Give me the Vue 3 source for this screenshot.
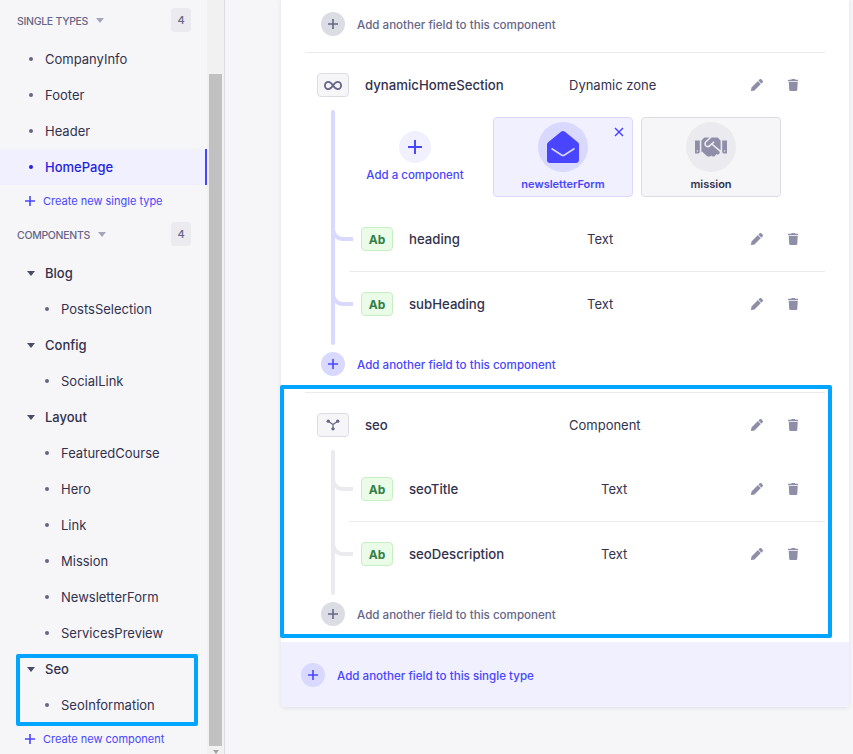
<template>
  <div class="page">
    <aside class="sidebar">
      <nav class="nav">
        <div class="group-head first">
          <span class="group-title">Single types</span>
          <span class="caret caret-light"></span>
          <span class="count">4</span>
        </div>
        <a v-for="item in singleTypes" :key="item" class="item" :class="{ active: item === 'HomePage' }">
          <span class="dot"></span>{{ item }}
        </a>
        <a class="create">
          <svg class="create-plus" viewBox="0 0 10 10"><path d="M5 0v10M0 5h10" /></svg>
          Create new single type
        </a>

        <div class="group-head second">
          <span class="group-title">Components</span>
          <span class="caret caret-light"></span>
          <span class="count">4</span>
        </div>
        <div class="categories">
          <div v-for="cat in categories" :key="cat.name">
            <div class="category"><span class="caret"></span>{{ cat.name }}</div>
            <a v-for="item in cat.items" :key="item" class="item sub">
              <span class="dot"></span>{{ item }}
            </a>
          </div>
        </div>
        <a class="create">
          <svg class="create-plus" viewBox="0 0 10 10"><path d="M5 0v10M0 5h10" /></svg>
          Create new component
        </a>
      </nav>
      <div class="scrollbar">
        <div class="thumb"></div>
        <span class="arrow"></span>
      </div>
    </aside>

    <main class="main">
      <div class="card">
        <div class="body">
          <div class="add-row">
            <span class="add-circle"><svg viewBox="0 0 10 10"><path d="M5 0v10M0 5h10" /></svg></span>
            <span class="add-text">Add another field to this component</span>
          </div>

          <section class="block">
            <div class="row top">
              <span class="kind">
                <svg class="kind-inf" viewBox="0 0 20 10">
                  <path d="M10 5C8 2 6.500 1 4.800 1 2.700 1 1 2.800 1 5s1.700 4 3.800 4C6.500 9 8 8 10 5c2 3 3.500 4 5.200 4 2.100 0 3.800-1.800 3.800-4s-1.700-4-3.800-4C13.500 1 12 2 10 5z" />
                </svg>
              </span>
              <span class="name">dynamicHomeSection</span>
              <span class="type">Dynamic zone</span>
              <span class="actions">
                <span class="act"><svg viewBox="0 0 512 512"><path :d="pencil" /></svg></span>
                <span class="act"><svg class="trash" viewBox="0 0 448 512"><path :d="trash" /></svg></span>
              </span>
            </div>
            <div class="nested accent">
              <div class="zone">
                <div class="zone-add">
                  <span class="zone-circle"><svg viewBox="0 0 10 10"><path d="M5 0v10M0 5h10" /></svg></span>
                  <span>Add a component</span>
                </div>
                <div class="tile selected">
                  <svg class="tile-x" viewBox="0 0 10 10"><path d="M1 1l8 8M9 1l-8 8" /></svg>
                  <span class="tile-icon">
                    <svg class="mail" viewBox="0 0 32 32">
                      <path class="mail-body" d="M14 .8c1.200-1 2.800-1 4 0l12.800 10.400c.8.600 1.200 1.400 1.200 2.400V29c0 1.700-1.300 3-3 3H3c-1.700 0-3-1.300-3-3V13.600c0-1 .4-1.800 1.200-2.400z" />
                      <path class="mail-flap" d="M4.500 17.500l10 6.500c1 .6 2 .6 3 0l10-6.500" />
                    </svg>
                  </span>
                  <span class="tile-label">newsletterForm</span>
                </div>
                <div class="tile">
                  <span class="tile-icon">
                    <svg class="shake" viewBox="0 0 640 512"><path :d="handshake" /></svg>
                  </span>
                  <span class="tile-label">mission</span>
                </div>
              </div>
              <div v-for="(f, i) in ['heading', 'subHeading']" :key="f" class="row field dz" :class="{ ruled: i > 0 }">
                <span class="ab">Ab</span>
                <span class="name">{{ f }}</span>
                <span class="type">Text</span>
                <span class="actions">
                  <span class="act"><svg viewBox="0 0 512 512"><path :d="pencil" /></svg></span>
                  <span class="act"><svg class="trash" viewBox="0 0 448 512"><path :d="trash" /></svg></span>
                </span>
              </div>
            </div>
            <div class="add-row active">
              <span class="add-circle"><svg viewBox="0 0 10 10"><path d="M5 0v10M0 5h10" /></svg></span>
              <span class="add-text">Add another field to this component</span>
            </div>
          </section>

          <section class="block">
            <div class="row top">
              <span class="kind">
                <svg class="kind-seo" viewBox="0 0 16 14">
                  <path class="seo-lines" d="M2.500 2.500L8 6.500l5.500-4M8 6.500v5" />
                  <circle cx="2.500" cy="2.500" r="2" />
                  <circle cx="13.500" cy="2.500" r="2" />
                  <circle cx="8" cy="11.500" r="2" />
                </svg>
              </span>
              <span class="name">seo</span>
              <span class="type">Component</span>
              <span class="actions">
                <span class="act"><svg viewBox="0 0 512 512"><path :d="pencil" /></svg></span>
                <span class="act"><svg class="trash" viewBox="0 0 448 512"><path :d="trash" /></svg></span>
              </span>
            </div>
            <div class="nested">
              <div v-for="(f, i) in ['seoTitle', 'seoDescription']" :key="f" class="row field" :class="{ ruled: i > 0 }">
                <span class="ab">Ab</span>
                <span class="name">{{ f }}</span>
                <span class="type">Text</span>
                <span class="actions">
                  <span class="act"><svg viewBox="0 0 512 512"><path :d="pencil" /></svg></span>
                  <span class="act"><svg class="trash" viewBox="0 0 448 512"><path :d="trash" /></svg></span>
                </span>
              </div>
            </div>
            <div class="add-row">
              <span class="add-circle"><svg viewBox="0 0 10 10"><path d="M5 0v10M0 5h10" /></svg></span>
              <span class="add-text">Add another field to this component</span>
            </div>
          </section>
        </div>
        <div class="footer-add">
          <span class="add-circle"><svg viewBox="0 0 10 10"><path d="M5 0v10M0 5h10" /></svg></span>
          <span class="add-text">Add another field to this single type</span>
        </div>
      </div>
    </main>

    <div class="mark mark-side"></div>
    <div class="mark mark-main"></div>
  </div>
</template>

<script setup>
const singleTypes = ['CompanyInfo', 'Footer', 'Header', 'HomePage']

const categories = [
  { name: 'Blog', items: ['PostsSelection'] },
  { name: 'Config', items: ['SocialLink'] },
  { name: 'Layout', items: ['FeaturedCourse', 'Hero', 'Link', 'Mission', 'NewsletterForm', 'ServicesPreview'] },
  { name: 'Seo', items: ['SeoInformation'] }
]

const pencil = 'M497.900 142.100l-46.100 46.100c-4.700 4.700-12.300 4.700-17 0l-111-111c-4.700-4.700-4.700-12.300 0-17l46.100-46.100c18.700-18.700 49.100-18.700 67.900 0l60.100 60.100c18.800 18.700 18.800 49.100 0 67.900zM284.200 99.800L21.600 362.400.4 483.900c-2.900 16.400 11.400 30.600 27.800 27.800l121.500-21.300 262.600-262.600c4.700-4.700 4.700-12.300 0-17l-111-111c-4.800-4.700-12.400-4.700-17.100 0z'
const trash = 'M432 32H312l-9.400-18.700A24 24 0 0 0 281.100 0H166.800a23.720 23.720 0 0 0-21.400 13.300L136 32H16A16 16 0 0 0 0 48v32a16 16 0 0 0 16 16h416a16 16 0 0 0 16-16V48a16 16 0 0 0-16-16zM53.200 467a48 48 0 0 0 47.900 45h245.800a48 48 0 0 0 47.900-45L416 128H32z'
const handshake = 'M434.700 64h-85.900c-8 0-15.700 3-21.600 8.400l-98.300 90c-.1.1-.2.3-.3.4-16.600 15.600-16.300 40.500-2.100 56 12.700 13.900 39.400 17.600 56.100 2.700.1-.1.3-.1.4-.2l79.900-73.200c6.500-5.900 16.700-5.500 22.600 1 6 6.500 5.500 16.600-1 22.600l-26.100 23.900L504 313.800c2.900 2.400 5.500 5 7.900 7.700V128l-54.600-54.600c-5.900-6-14.100-9.400-22.600-9.400zM544 128.200v223.900c0 17.700 14.300 32 32 32h64V128.200h-96zm48 223.900c-8.800 0-16-7.200-16-16s7.200-16 16-16 16 7.200 16 16-7.200 16-16 16zM0 384h64c17.700 0 32-14.300 32-32V128.200H0V384zm48-63.900c8.800 0 16 7.200 16 16s-7.200 16-16 16-16-7.200-16-16c0-8.900 7.200-16 16-16zm435.900 18.600L334.600 217.500l-30 27.500c-29.700 27.100-75.200 24.500-101.700-4.400-26.900-29.400-24.800-74.900 4.400-101.700L289.100 64h-83.800c-8.500 0-16.600 3.400-22.600 9.400L128 128v223.900h18.300l90.500 81.900c27.400 22.300 67.700 18.100 90-9.300l.2-.2 17.900 15.500c15.900 13 39.400 10.500 52.300-5.400l31.400-38.600 5.400 4.400c13.700 11.100 33.900 9.100 45-4.700l9.500-11.700c11.200-13.800 9.100-33.900-4.600-45.100z'
</script>

<style>
html, body {
  margin: 0;
  background: #f6f6f9;
}
</style>

<style scoped>
* {
  box-sizing: border-box;
}

.page {
  position: relative;
  display: flex;
  height: 754px;
  overflow: hidden;
  background: #f6f6f9;
  color: #32324d;
  font-family: Inter, sans-serif;
  font-size: 13px;
}

.sidebar {
  display: flex;
  flex: none;
  width: 225px;
  border-right: 1px solid #dcdce4;
}

.nav {
  flex: none;
  width: 207px;
}

.scrollbar {
  position: relative;
  flex: 1;
  padding: 74px 2px 0;
  background: #f1f1f1;
}

.thumb {
  height: 672px;
  background: #c1c1c1;
}

.arrow {
  position: absolute;
  left: 6px;
  bottom: 0;
  border: 3px solid transparent;
  border-top: 4px solid #a3a3a3;
  border-bottom: 0;
}

.group-head {
  display: flex;
  align-items: center;
  height: 24px;
  padding: 0 16px 0 17px;
}

.group-head.first {
  margin: 8px 0 9px;
}

.group-head.second {
  margin: 5px 0 9px;
}

.group-title {
  padding-top: 2px;
  color: #666687;
  font-size: 10.500px;
  font-weight: 500;
  letter-spacing: -0.3px;
  text-transform: uppercase;
}

.count {
  display: flex;
  align-items: center;
  justify-content: center;
  width: 20px;
  height: 24px;
  margin-left: auto;
  border-radius: 4px;
  background: #eaeaef;
  color: #666687;
  font-size: 11px;
  font-weight: 500;
}

.caret {
  display: inline-block;
  width: 0;
  height: 0;
  border: 4px solid transparent;
  border-top: 5px solid #4a4a6a;
  border-bottom: 0;
}

.caret-light {
  margin-left: 8px;
  border-top-color: #a5a5ba;
}

.item {
  display: flex;
  align-items: center;
  height: 36px;
  padding-left: 29px;
}

.item.sub {
  padding-left: 45px;
}

.dot {
  flex: none;
  width: 4px;
  height: 4px;
  margin-right: 12px;
  border-radius: 50%;
  background: #666687;
}

.item.active {
  border-right: 2px solid #4945ff;
  background: #f0f0ff;
  color: #271fe0;
  font-weight: 500;
}

.item.active .dot {
  background: #271fe0;
}

.category {
  display: flex;
  align-items: center;
  height: 36px;
  padding-left: 27px;
  font-weight: 500;
}

.category .caret {
  margin-right: 10px;
}

.create {
  display: flex;
  align-items: center;
  height: 32px;
  padding-left: 25px;
  color: #4945ff;
  font-size: 11px;
}

.create-plus {
  width: 10px;
  height: 10px;
  margin-right: 8px;
  fill: none;
  stroke: #4945ff;
  stroke-width: 1.600;
}

.main {
  flex: 1;
  padding: 0 4px 0 56px;
}

.card {
  border-radius: 0 0 4px 4px;
  background: #fff;
  box-shadow: 0 1px 4px rgba(33, 33, 52, 0.1);
}

.body {
  padding: 0 24px 4px;
}

.add-row {
  display: flex;
  align-items: center;
  gap: 12px;
  height: 48px;
  padding-left: 16px;
  color: #666687;
  font-size: 11.600px;
  font-weight: 500;
}

.add-text {
  padding-top: 2px;
}

.add-circle {
  display: flex;
  align-items: center;
  justify-content: center;
  flex: none;
  width: 24px;
  height: 24px;
  border-radius: 50%;
  background: #dcdce4;
}

.add-circle svg {
  width: 10px;
  height: 10px;
  fill: none;
  stroke: #666687;
  stroke-width: 1.600;
}

.add-row.active {
  color: #4945ff;
}

.add-row.active .add-circle,
.footer-add .add-circle {
  background: #d9d8ff;
}

.add-row.active .add-circle svg,
.footer-add .add-circle svg {
  stroke: #4945ff;
}

.block {
  margin-top: 4px;
  border-top: 1px solid #eaeaef;
}

.row {
  display: flex;
  align-items: center;
  height: 64px;
}

.row.top {
  padding-left: 12px;
}

.kind {
  display: flex;
  align-items: center;
  justify-content: center;
  flex: none;
  width: 32px;
  height: 24px;
  margin-right: 16px;
  border: 1px solid #dcdce4;
  border-radius: 4px;
  background: #f6f6f9;
}

.kind-inf {
  width: 18px;
  height: 9px;
  fill: none;
  stroke: #666687;
  stroke-width: 2;
}

.kind-seo {
  width: 14px;
  height: 12px;
  fill: #666687;
}

.seo-lines {
  fill: none;
  stroke: #666687;
  stroke-width: 1.400;
}

.name {
  flex: none;
  width: 204px;
  font-size: 13.200px;
  font-weight: 500;
}

.type {
  flex: none;
}

.actions {
  display: flex;
  margin-left: auto;
  padding-right: 14px;
}

.act {
  display: flex;
  align-items: center;
  justify-content: center;
  width: 36px;
  height: 24px;
}

.act svg {
  width: 12px;
  height: 12px;
  fill: #8e8ea9;
}

.act svg.trash {
  width: 10.500px;
}

.nested {
  position: relative;
  margin-top: 0;
  padding: 0 0 4px 44px;
}

.nested::before {
  content: '';
  position: absolute;
  left: 26px;
  top: -7px;
  bottom: -5px;
  width: 4px;
  border-radius: 2px;
  background: #eaeaef;
}

.nested.accent::before {
  background: #d9d8ff;
}

.field {
  position: relative;
  padding-left: 12px;
}

.field.ruled {
  height: 65px;
  border-top: 1px solid #eaeaef;
}

.field::before {
  content: '';
  position: absolute;
  left: -18px;
  bottom: calc(50% - 2px);
  width: 18px;
  height: 14px;
  border-left: 4px solid #eaeaef;
  border-bottom: 4px solid #eaeaef;
  border-bottom-left-radius: 12px;
}

.accent .field::before {
  border-color: #d9d8ff;
}

.ab {
  display: flex;
  align-items: center;
  justify-content: center;
  flex: none;
  width: 32px;
  height: 24px;
  margin-right: 16px;
  border: 1px solid #c6f0c2;
  border-radius: 4px;
  background: #eafbe7;
  color: #328048;
  font-size: 12px;
  font-weight: 700;
}

.field .name {
  width: 192px;
}

.field.dz .name {
  width: 178px;
}

.zone {
  display: flex;
  gap: 8px;
  height: 80px;
  margin-bottom: 10px;
}

.zone-add {
  display: flex;
  flex-direction: column;
  align-items: center;
  flex: none;
  width: 132px;
  margin-right: 4px;
  padding-top: 14px;
  color: #4945ff;
  font-size: 11.500px;
  font-weight: 500;
}

.zone-circle {
  display: flex;
  align-items: center;
  justify-content: center;
  width: 32px;
  height: 32px;
  margin-bottom: 5px;
  border-radius: 50%;
  background: #f0f0ff;
}

.zone-circle svg {
  width: 14px;
  height: 14px;
  fill: none;
  stroke: #4945ff;
  stroke-width: 1.400;
}

.tile {
  position: relative;
  display: flex;
  flex-direction: column;
  align-items: center;
  flex: none;
  width: 140px;
  padding-top: 4px;
  border: 1px solid #dcdce4;
  border-radius: 4px;
  background: #f6f6f9;
  font-size: 11px;
  font-weight: 600;
}

.tile.selected {
  border-color: #d9d8ff;
  background: #f0f0ff;
  color: #4945ff;
}

.tile-x {
  position: absolute;
  top: 9px;
  right: 8px;
  width: 10px;
  height: 10px;
  fill: none;
  stroke: #4945ff;
  stroke-width: 1.500;
}

.tile-icon {
  display: flex;
  align-items: center;
  justify-content: center;
  width: 50px;
  height: 50px;
  margin-bottom: 5px;
  border-radius: 50%;
  background: #eaeaef;
}

.selected .tile-icon {
  background: #d9d8ff;
}

.mail {
  width: 32px;
  height: 32px;
}

.mail-body {
  fill: #4945ff;
}

.mail-flap {
  fill: none;
  stroke: #d9d8ff;
  stroke-width: 1.500;
}

.shake {
  width: 32px;
  height: 26px;
  fill: #8e8ea9;
}

.footer-add {
  display: flex;
  align-items: center;
  gap: 12px;
  height: 65px;
  padding-left: 20px;
  border-radius: 0 0 4px 4px;
  background: #f0f0ff;
  color: #4945ff;
  font-size: 11.600px;
  font-weight: 500;
}

.mark {
  position: absolute;
  border: 4px solid #00a5ff;
  border-radius: 2px;
}

.mark-side {
  left: 16px;
  top: 654px;
  width: 182px;
  height: 72px;
}

.mark-main {
  left: 280px;
  top: 385px;
  width: 552px;
  height: 253px;
}
</style>
